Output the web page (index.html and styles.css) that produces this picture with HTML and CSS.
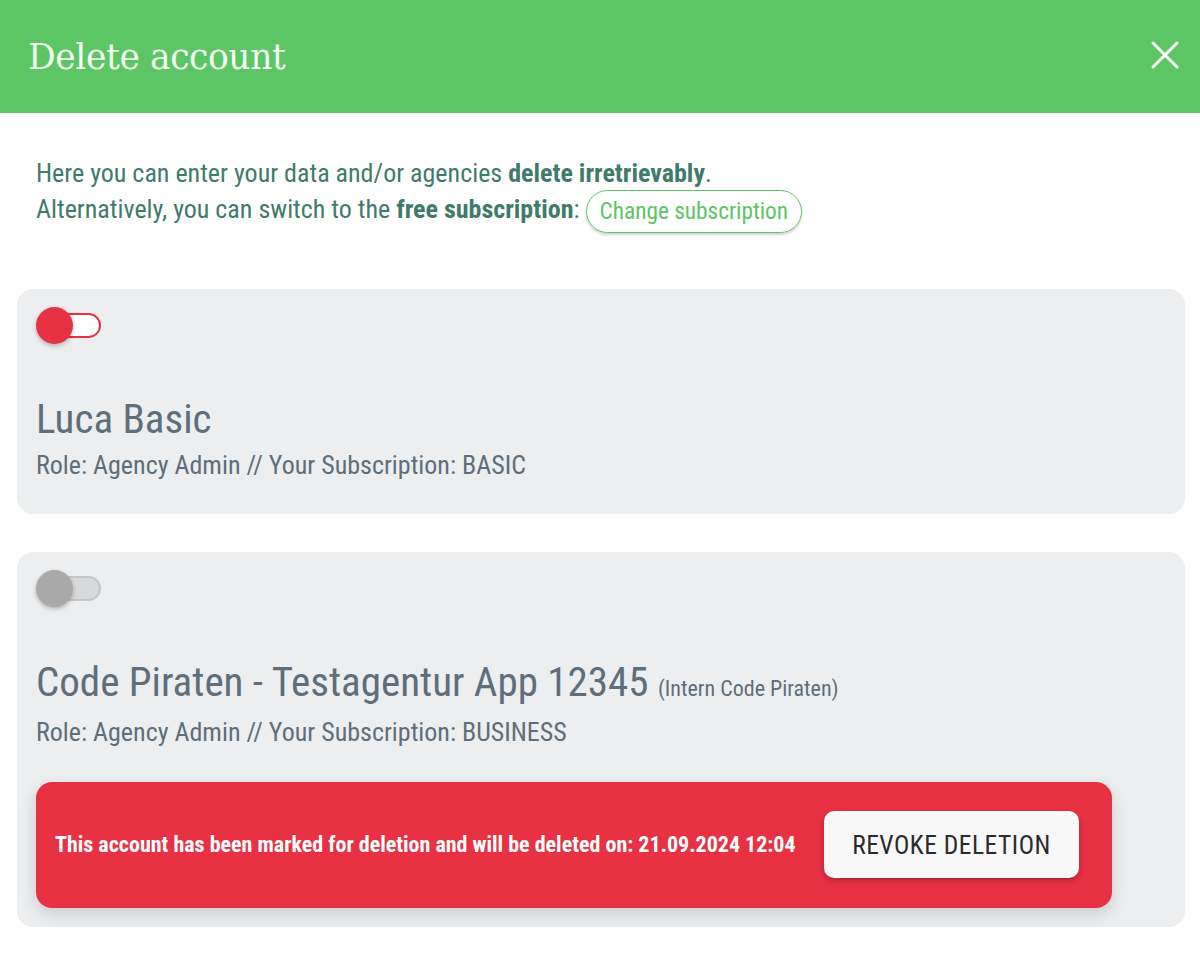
FILE: index.html
```html
<!DOCTYPE html>
<html>
<head>
<meta charset="utf-8">
<link rel="stylesheet" href="styles.css">
</head>
<body>
<div class="dialog">
  <header class="header">
    <h1 class="title">Delete account</h1>
    <button class="close" aria-label="Close">
      <svg width="30" height="30" viewBox="0 0 30 30"><path d="M3 3 L27 27 M27 3 L3 27" stroke="#fff" stroke-width="3" stroke-linecap="round"/></svg>
    </button>
  </header>
  <main class="content">
    <p class="intro">Here you can enter your data and/or agencies <b>delete irretrievably</b>.<br>
    Alternatively, you can switch to the <b>free subscription</b>: <span class="outline-btn">Change subscription</span></p>

    <section class="card">
      <div class="toggle on"><span class="track"></span><span class="knob"></span></div>
      <h2 class="name">Luca Basic</h2>
      <div class="role">Role: Agency Admin // Your Subscription: BASIC</div>
    </section>

    <section class="card card2">
      <div class="toggle off"><span class="track"></span><span class="knob"></span></div>
      <h2 class="name">Code Piraten - Testagentur App 12345 <small>(Intern Code Piraten)</small></h2>
      <div class="role">Role: Agency Admin // Your Subscription: BUSINESS</div>
      <div class="alert">
        <span class="alert-text">This account has been marked for deletion and will be deleted on: 21.09.2024 12:04</span>
        <span class="revoke">REVOKE DELETION</span>
      </div>
    </section>
  </main>
</div>
</body>
</html>
```
FILE: styles.css
```css
* { box-sizing: border-box; }
html, body { margin: 0; padding: 0; background: #fff; }
body { font-family: "Roboto Condensed", Roboto, sans-serif; font-stretch: 75%; }
.header {
  height: 113px;
  background: #5cc564;
  display: flex;
  align-items: center;
  justify-content: space-between;
  padding: 0 20px 0 28px;
}
.title {
  margin: 0;
  font-family: "Roboto Slab", "DejaVu Serif", serif;
  font-stretch: normal;
  font-weight: 400;
  font-size: 34.5px;
  color: #f3fbf3;
  letter-spacing: -0.4px;
}
.close { background: none; border: 0; padding: 0; width: 30px; height: 30px; margin-top: -4px; cursor: pointer; }
.content { padding: 42px 15px 0 17px; }
.intro {
  margin: 0 0 61px 19px;
  font-size: 26px;
  line-height: 36px;
  color: #3f7b6b;
}
.intro b { font-weight: 700; }
.outline-btn {
  display: inline-block;
  border: 1.5px solid #5cc564;
  border-radius: 22px;
  padding: 0 13px;
  line-height: 40px;
  height: 43px;
  margin: -5px 0 -5px 0;
  color: #5cc564;
  font-size: 23.3px;
  box-shadow: 0 2px 3px rgba(0,0,0,0.18);
  vertical-align: middle;
}
.card {
  background: #edeef0;
  border-radius: 16px;
  padding: 18px 19px 33px 19px;
  margin-bottom: 38px;
  color: #5e6e7b;
}
.toggle { position: relative; width: 65px; height: 37px; }
.track {
  position: absolute; left: 12px; top: 6px; width: 53px; height: 25px;
  border-radius: 13px;
}
.knob {
  position: absolute; left: 0; top: 0; width: 37px; height: 37px; border-radius: 50%;
  box-shadow: 0 2px 4px rgba(0,0,0,0.25);
}
.on .track { background: #fff; border: 2px solid #e83143; }
.on .knob { background: #e83143; }
.off .track { background: #d8d9db; border: 2px solid #c4c5c7; }
.off .knob { background: #a9a9aa; }
.name {
  margin: 51px 0 0 0;
  font-weight: 400;
  font-size: 41px;
  line-height: 48px;
  color: #5e6e7b;
}
.name small { font-size: 22px; line-height: 1; }
.role { font-size: 26px; line-height: 32px; margin-top: 6px; }
.card2 { padding-bottom: 19px; }
.card2 .role { margin-top: 10px; }
.alert {
  margin-top: 34px;
  width: 1076px;
  background: #e83143;
  border-radius: 16px;
  height: 126px;
  display: flex;
  align-items: center;
  padding: 0 33px 0 19px;
  gap: 20px;
  box-shadow: 0 6px 16px rgba(0,0,0,0.15);
}
.alert-text { color: #fff; font-weight: 700; font-size: 22px; }
.revoke {
  background: #f8f8f9;
  border-radius: 10px;
  height: 67px;
  width: 255px;
  flex: none;
  display: flex; align-items: center; justify-content: center;
  font-size: 25.5px;
  color: #2b2b2b;
  letter-spacing: 0.5px;
  box-shadow: 0 3px 6px rgba(0,0,0,0.25);
  margin-left: auto;
}
```
